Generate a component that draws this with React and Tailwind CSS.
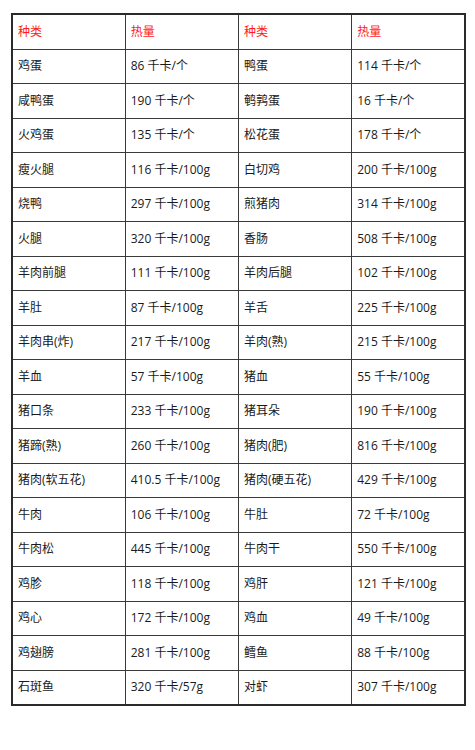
import React from "react";

const rows = [
  ["鸡蛋", "86 千卡/个", "鸭蛋", "114 千卡/个"],
  ["咸鸭蛋", "190 千卡/个", "鹌鹑蛋", "16 千卡/个"],
  ["火鸡蛋", "135 千卡/个", "松花蛋", "178 千卡/个"],
  ["瘦火腿", "116 千卡/100g", "白切鸡", "200 千卡/100g"],
  ["烧鸭", "297 千卡/100g", "煎猪肉", "314 千卡/100g"],
  ["火腿", "320 千卡/100g", "香肠", "508 千卡/100g"],
  ["羊肉前腿", "111 千卡/100g", "羊肉后腿", "102 千卡/100g"],
  ["羊肚", "87 千卡/100g", "羊舌", "225 千卡/100g"],
  ["羊肉串(炸)", "217 千卡/100g", "羊肉(熟)", "215 千卡/100g"],
  ["羊血", "57 千卡/100g", "猪血", "55 千卡/100g"],
  ["猪口条", "233 千卡/100g", "猪耳朵", "190 千卡/100g"],
  ["猪蹄(熟)", "260 千卡/100g", "猪肉(肥)", "816 千卡/100g"],
  ["猪肉(软五花)", "410.5 千卡/100g", "猪肉(硬五花)", "429 千卡/100g"],
  ["牛肉", "106 千卡/100g", "牛肚", "72 千卡/100g"],
  ["牛肉松", "445 千卡/100g", "牛肉干", "550 千卡/100g"],
  ["鸡胗", "118 千卡/100g", "鸡肝", "121 千卡/100g"],
  ["鸡心", "172 千卡/100g", "鸡血", "49 千卡/100g"],
  ["鸡翅膀", "281 千卡/100g", "鳕鱼", "88 千卡/100g"],
  ["石斑鱼", "320 千卡/57g", "对虾", "307 千卡/100g"],
];

const header = ["种类", "热量", "种类", "热量"];

export default function App() {
  return (
    <div
      className="min-h-[750px] w-[475px] bg-white pl-[11px] pt-[13px]"
      style={{ fontFamily: '"Open Sans", "Noto Sans CJK SC", sans-serif' }}
    >
      <table className="w-[455px] table-fixed border-collapse border-2 border-[#2a2a2a] text-[12px] text-[#1a1a1a]">
        <thead>
          <tr className="h-[35px]">
            {header.map((h, i) => (
              <th
                key={i}
                className="border border-[#3a3a3a] pl-[5px] text-left font-normal text-[#ff1a1a]"
              >
                {h}
              </th>
            ))}
          </tr>
        </thead>
        <tbody>
          {rows.map((r, i) => (
            <tr key={i} className="h-[34.5px]">
              {r.map((c, j) => (
                <td key={j} className="border border-[#3a3a3a] pl-[5px] whitespace-nowrap">
                  {c}
                </td>
              ))}
            </tr>
          ))}
        </tbody>
      </table>
    </div>
  );
}
